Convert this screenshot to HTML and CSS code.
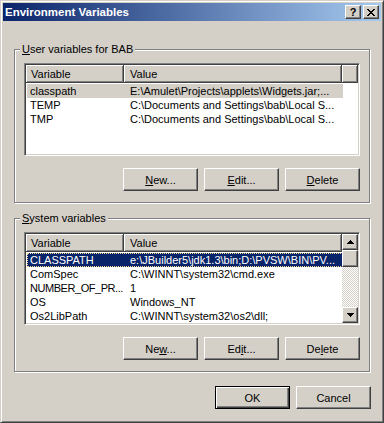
FILE: index.html
```html
<!DOCTYPE html>
<html lang="en">
<head>
  <meta charset="UTF-8" />
  <meta name="viewport" content="width=device-width, initial-scale=1.0" />
  <title>Environment Variables</title>
  <link rel="stylesheet" href="styles.css">
</head>

<body>
  <div class="window">
    <div class="titlebar"> <!-- barra de titulo -->
      <span class="title">Environment Variables</span>
      <div class="caption-buttons">
        <button class="cap-btn">?</button>
        <button class="cap-btn">
          <svg width="8" height="7" viewBox="0 0 8 7" shape-rendering="crispEdges">
            <path fill="#000" d="M0 0h2v1H0z M6 0h2v1H6z M1 1h2v1H1z M5 1h2v1H5z M2 2h4v1H2z M3 3h2v1H3z M2 4h4v1H2z M1 5h2v1H1z M5 5h2v1H5z M0 6h2v1H0z M6 6h2v1H6z"/>
          </svg>
        </button>
      </div>
    </div>

    <div class="group group-user"> <!-- variables de usuario -->
      <div class="group-title"><u>U</u>ser variables for BAB</div>
      <div class="listview">
        <div class="lv-main">
          <div class="lv-header">
            <div class="lv-col col-var">Variable</div>
            <div class="lv-col col-val">Value</div>
            <div class="lv-col col-fill"></div>
          </div>
          <div class="lv-body">
            <div class="lv-row sel-inactive">
              <div class="lv-cell cell-var">classpath</div>
              <div class="lv-cell cell-val">E:\Amulet\Projects\applets\Widgets.jar;...</div>
            </div>
            <div class="lv-row">
              <div class="lv-cell cell-var">TEMP</div>
              <div class="lv-cell cell-val">C:\Documents and Settings\bab\Local S...</div>
            </div>
            <div class="lv-row">
              <div class="lv-cell cell-var">TMP</div>
              <div class="lv-cell cell-val">C:\Documents and Settings\bab\Local S...</div>
            </div>
          </div>
        </div>
      </div>
      <div class="btn-row">
        <button class="btn"><u>N</u>ew...</button>
        <button class="btn"><u>E</u>dit...</button>
        <button class="btn"><u>D</u>elete</button>
      </div>
    </div>

    <div class="group group-system"> <!-- variables de sistema -->
      <div class="group-title"><u>S</u>ystem variables</div>
      <div class="listview">
        <div class="lv-main">
          <div class="lv-header">
            <div class="lv-col col-var">Variable</div>
            <div class="lv-col col-val">Value</div>
          </div>
          <div class="lv-body">
            <div class="lv-row sel-active">
              <div class="lv-cell cell-var">CLASSPATH</div>
              <div class="lv-cell cell-val">e:\JBuilder5\jdk1.3\bin;D:\PVSW\BIN\PV...</div>
            </div>
            <div class="lv-row">
              <div class="lv-cell cell-var">ComSpec</div>
              <div class="lv-cell cell-val">C:\WINNT\system32\cmd.exe</div>
            </div>
            <div class="lv-row">
              <div class="lv-cell cell-var cell-tight">NUMBER_OF_PR...</div>
              <div class="lv-cell cell-val">1</div>
            </div>
            <div class="lv-row">
              <div class="lv-cell cell-var">OS</div>
              <div class="lv-cell cell-val">Windows_NT</div>
            </div>
            <div class="lv-row">
              <div class="lv-cell cell-var">Os2LibPath</div>
              <div class="lv-cell cell-val">C:\WINNT\system32\os2\dll;</div>
            </div>
          </div>
        </div>
        <div class="scrollbar">
          <div class="sb-btn">
            <svg width="7" height="4" viewBox="0 0 7 4" shape-rendering="crispEdges">
              <path fill="#000" d="M3 0h1v1H3z M2 1h3v1H2z M1 2h5v1H1z M0 3h7v1H0z"/>
            </svg>
          </div>
          <div class="sb-track">
            <div class="sb-thumb"></div>
          </div>
          <div class="sb-btn">
            <svg width="7" height="4" viewBox="0 0 7 4" shape-rendering="crispEdges">
              <path fill="#000" d="M0 0h7v1H0z M1 1h5v1H1z M2 2h3v1H2z M3 3h1v1H3z"/>
            </svg>
          </div>
        </div>
      </div>
      <div class="btn-row">
        <button class="btn">Ne<u>w</u>...</button>
        <button class="btn">Ed<u>i</u>t...</button>
        <button class="btn">De<u>l</u>ete</button>
      </div>
    </div>

    <div class="dialog-buttons">
      <button class="btn btn-default">OK</button>
      <button class="btn">Cancel</button>
    </div>
  </div>
</body>

</html>
```

FILE: styles.css
```css
body {
  margin: 0;
  background-color: #d4d0c8;
  font-family: "Liberation Sans", Arial, sans-serif;
  font-size: 11px;
  color: #000;
}

.window {
  width: 384px;
  height: 423px;
  box-sizing: border-box;
  border: 1px solid;
  border-color: #d4d0c8 #404040 #404040 #d4d0c8;
  box-shadow: inset 1px 1px #fff, inset -1px -1px #808080;
  padding: 2px;
  background-color: #d4d0c8;
}

.titlebar {
  height: 18px;
  display: flex;
  align-items: center;
  justify-content: space-between;
  padding: 0 2px;
  background: linear-gradient(to right, #0a246a, #a6caf0);
}

.title {
  color: #fff;
  font-weight: bold;
  font-size: 11.5px;
}

.caption-buttons {
  display: flex;
  gap: 2px;
}

.cap-btn,
.btn,
.sb-btn,
.sb-thumb {
  box-sizing: border-box;
  border: 1px solid;
  border-color: #fff #404040 #404040 #fff;
  box-shadow: inset -1px -1px #808080, inset 1px 1px #d4d0c8;
  background-color: #d4d0c8;
}

.cap-btn {
  width: 16px;
  height: 14px;
  padding: 0;
  display: flex;
  align-items: center;
  justify-content: center;
  font-family: inherit;
  font-size: 11px;
  font-weight: bold;
  line-height: 12px;
  color: #000;
}

/* cajas de grupo */
.group {
  margin: 0 11px;
  border: 1px solid #808080;
  box-shadow: 1px 1px #fff, inset 1px 1px #fff;
  padding: 0 9px 11px;
}

.group-user {
  margin-top: 28px;
}

.group-system {
  margin-top: 15px;
}

.group-title {
  width: fit-content;
  margin: -7px 0 0 -4px;
  padding: 0 2px;
  line-height: 13px;
  background-color: #d4d0c8;
}

/* listas */
.listview {
  display: flex;
  height: 93px;
  box-sizing: border-box;
  margin-top: 7px;
  border: 1px solid;
  border-color: #808080 #fff #fff #808080;
  padding: 1px;
  box-shadow: inset 1px 1px #404040, inset -1px -1px #d4d0c8;
  background-color: #fff;
}

.lv-main {
  flex: 1;
  overflow: hidden;
}

.lv-header {
  display: flex;
  height: 18px;
}

.lv-col {
  box-sizing: border-box;
  height: 18px;
  line-height: 18px;
  padding-left: 5px;
  background-color: #d4d0c8;
  box-shadow: inset -1px -1px #404040, inset 1px 1px #fff, inset -2px -2px #808080;
}

.col-var {
  width: 98px;
}

.col-val {
  width: 218px;
  padding-left: 6px;
}

.col-fill {
  flex: 1;
}

.lv-body {
  padding-top: 1px;
}

.lv-row {
  display: flex;
  width: 316px;
  height: 14px;
  line-height: 14px;
  margin-left: 1px;
  box-sizing: border-box;
}

.lv-cell {
  box-sizing: border-box;
  white-space: nowrap;
  overflow: hidden;
}

.cell-var {
  width: 97px;
  padding-left: 3px;
}

.cell-tight {
  letter-spacing: -0.45px;
}

.cell-val {
  width: 219px;
  padding-left: 6px;
}

.sel-inactive {
  background-color: #d4d0c8;
}

.sel-active {
  background-color: #0a246a;
  color: #fff;
  outline: 1px dotted #f5db95;
  outline-offset: -1px;
}

/* barra de desplazamiento */
.scrollbar {
  width: 16px;
  display: flex;
  flex-direction: column;
}

.sb-btn {
  height: 16px;
  display: flex;
  align-items: center;
  justify-content: center;
}

.sb-track {
  flex: 1;
  background: repeating-conic-gradient(#fff 0% 25%, #d4d0c8 0% 50%) 0 0 / 2px 2px;
}

.sb-thumb {
  height: 17px;
}

/* botones */
.btn-row {
  display: flex;
  justify-content: flex-end;
  gap: 6px;
  margin-top: 12px;
}

.btn {
  width: 75px;
  height: 23px;
  padding: 0;
  font-family: inherit;
  font-size: 11px;
  color: #000;
}

.btn-default {
  border: 1px solid #000;
  box-shadow: inset 1px 1px #fff, inset -1px -1px #404040, inset -2px -2px #808080;
}

.dialog-buttons {
  display: flex;
  justify-content: flex-end;
  gap: 6px;
  margin: 14px 10px 0 0;
}
```
